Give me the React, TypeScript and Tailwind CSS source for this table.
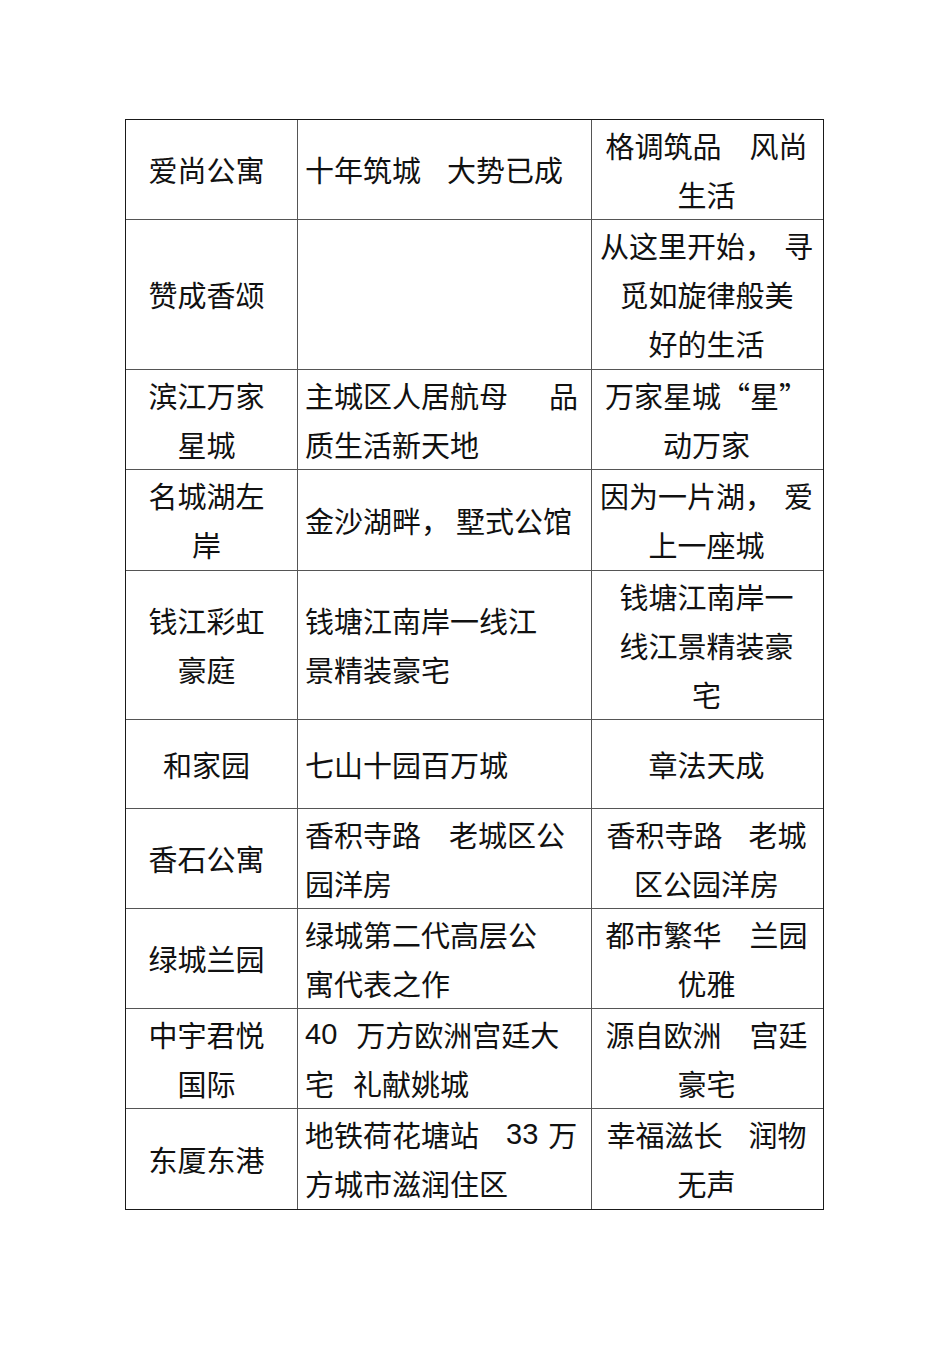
type Gap = { g: string };
type Seg = string | Gap | { n: string };
type Line = Seg[];
type Cell = { align: 'center' | 'left'; lines: Line[] };

const G = (g: string): Gap => ({ g });
const N = (n: string) => ({ n });

const c = (...lines: Line[]): Cell => ({ align: 'center', lines });
const l = (...lines: Line[]): Cell => ({ align: 'left', lines });

const ROWS: { h: string; cells: [Cell, Cell, Cell] }[] = [
  {
    h: 'h-[100px]',
    cells: [
      c(['爱尚公寓']),
      l(['十年筑城', G('w-[26px]'), '大势已成']),
      c(['格调筑品', G('w-[28px]'), '风尚'], ['生活']),
    ],
  },
  {
    h: 'h-[150px]',
    cells: [
      c(['赞成香颂']),
      l(),
      c(['从这里开始，', G('w-[10px]'), '寻'], ['觅如旋律般美'], ['好的生活']),
    ],
  },
  {
    h: 'h-[100px]',
    cells: [
      c(['滨江万家'], ['星城']),
      l(['主城区人居航母', G('w-[41px]'), '品'], ['质生活新天地']),
      c(['万家星城“星”'], ['动万家']),
    ],
  },
  {
    h: 'h-[101px]',
    cells: [
      c(['名城湖左'], ['岸']),
      l(['金沙湖畔，', G('w-[6px]'), '墅式公馆']),
      c(['因为一片湖，', G('w-[10px]'), '爱'], ['上一座城']),
    ],
  },
  {
    h: 'h-[149px]',
    cells: [
      c(['钱江彩虹'], ['豪庭']),
      l(['钱塘江南岸一线江'], ['景精装豪宅']),
      c(['钱塘江南岸一'], ['线江景精装豪'], ['宅']),
    ],
  },
  {
    h: 'h-[89px]',
    cells: [c(['和家园']), l(['七山十园百万城']), c(['章法天成'])],
  },
  {
    h: 'h-[100px]',
    cells: [
      c(['香石公寓']),
      l(['香积寺路', G('w-[28px]'), '老城区公'], ['园洋房']),
      c(['香积寺路', G('w-[26px]'), '老城'], ['区公园洋房']),
    ],
  },
  {
    h: 'h-[100px]',
    cells: [
      c(['绿城兰园']),
      l(['绿城第二代高层公'], ['寓代表之作']),
      c(['都市繁华', G('w-[28px]'), '兰园'], ['优雅']),
    ],
  },
  {
    h: 'h-[100px]',
    cells: [
      c(['中宇君悦'], ['国际']),
      l([N('40'), G('w-[19px]'), '万方欧洲宫廷大'], ['宅', G('w-[19px]'), '礼献姚城']),
      c(['源自欧洲', G('w-[28px]'), '宫廷'], ['豪宅']),
    ],
  },
  {
    h: 'h-[100px]',
    cells: [
      c(['东厦东港']),
      l(['地铁荷花塘站', G('w-[27px]'), N('33'), G('w-[10px]'), '万'], ['方城市滋润住区']),
      c(['幸福滋长', G('w-[26px]'), '润物'], ['无声']),
    ],
  },
];

const COLS = [
  'w-[172px] border-r border-[#555] pr-[10px]',
  'w-[294px] border-r border-[#555] pl-[7px]',
  'w-[232px] pr-[3px]',
];

function Seg({ s }: { s: Seg }) {
  if (typeof s === 'string') return <span>{s}</span>;
  if ('g' in s) return <span className={`inline-block ${s.g}`} />;
  return <span className="font-['Liberation_Sans',Arial,sans-serif]">{s.n}</span>;
}

export default function App() {
  return (
    <div className="min-h-[1345px] w-[950px] bg-white pt-[119px] pl-[125px] font-['Noto_Sans_CJK_SC','Noto_Sans',sans-serif] text-[29px] leading-[49px] text-[#111]">
      <div className="flex w-[699px] flex-col border border-[#1a1a1a]">
        {ROWS.map((row, ri) => (
          <div
            key={ri}
            className={`flex ${row.h} ${ri < ROWS.length - 1 ? 'border-b border-[#555]' : ''}`}
          >
            {row.cells.map((cell, ci) => (
              <div
                key={ci}
                className={`flex shrink-0 flex-col justify-center ${COLS[ci]} ${
                  cell.align === 'center' ? 'items-center' : 'items-start'
                }`}
              >
                {cell.lines.map((line, li) => (
                  <div key={li} className="flex whitespace-nowrap">
                    {line.map((s, si) => (
                      <Seg key={si} s={s} />
                    ))}
                  </div>
                ))}
              </div>
            ))}
          </div>
        ))}
      </div>
    </div>
  );
}
